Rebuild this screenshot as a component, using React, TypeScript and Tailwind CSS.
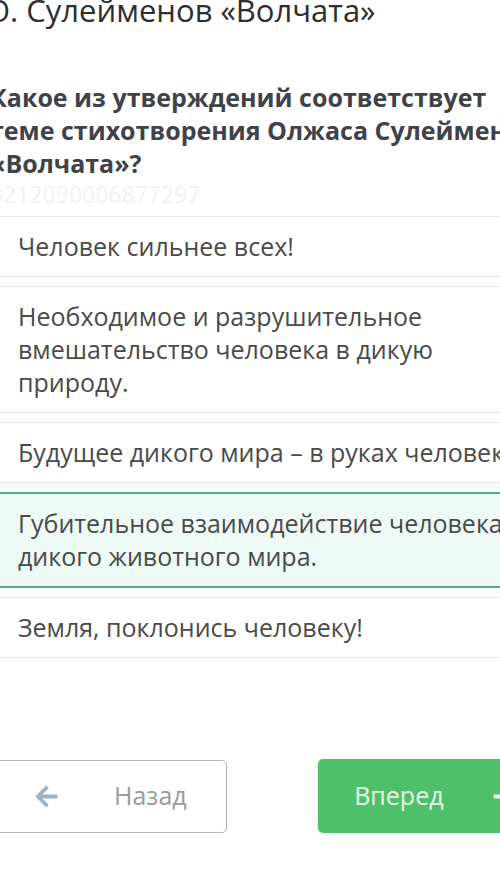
import { FaArrowLeft, FaArrowRight } from 'react-icons/fa';

const options = [
  { text: 'Человек сильнее всех!', selected: false },
  { text: 'Необходимое и разрушительное вмешательство человека в дикую природу.', selected: false },
  { text: 'Будущее дикого мира – в руках человека.', selected: false },
  { text: 'Губительное взаимодействие человека и дикого животного мира.', selected: true },
  { text: 'Земля, поклонись человеку!', selected: false },
];

export default function App() {
  return (
    <div className="w-[500px] h-[872px] overflow-hidden bg-white font-['Open_Sans',sans-serif]">
      <div className="-ml-[16px] w-[580px]">
        {/* Title */}
        <h1 className="mt-[-8px] pl-[2px] text-[31px] leading-[36px] text-[#2e2e2e] whitespace-nowrap">
          О. Сулейменов «Волчата»
        </h1>

        {/* Question */}
        <p className="mt-[53px] pl-[6px] text-[25px] leading-[33px] font-bold text-[#3f4349] whitespace-nowrap">
          Какое из утверждений соответствует
          <br />
          теме стихотворения Олжаса Сулейменова
          <br />
          «Волчата»?
        </p>
        <p className="mt-[2px] pl-[6px] text-[23px] leading-[24px] text-[#f1f1f1]">
          3212090006877297
        </p>

        {/* Options */}
        <div className="mt-[10px] flex flex-col gap-[9px]">
          {options.map(option => (
            <div
              key={option.text}
              className={
                option.selected
                  ? 'border-y-2 border-[#5aa99c] bg-[#eefaf5] pl-[34px] py-[13px]'
                  : 'border-y border-[#e6e6e6] bg-white pl-[34px] py-[13px]'
              }
            >
              <span className="block w-[520px] text-[25px] leading-[33px] text-[#4a4a4a]">
                {option.text}
              </span>
            </div>
          ))}
        </div>

        {/* Navigation */}
        <div className="mt-[101px] flex items-center gap-[91px]">
          <button className="flex items-center w-[247px] h-[73px] border-[1.5px] border-[#b4b4b4] rounded-[5px] bg-white pl-[49px]">
            <FaArrowLeft className="w-[25px] h-[25px] text-[#9fb3c8]" />
            <span className="ml-[55px] text-[25px] text-[#9b9b9b]">Назад</span>
          </button>
          <button className="flex items-center w-[250px] h-[74px] rounded-[5px] bg-[#4ec06a] pl-[36px]">
            <span className="text-[25px] text-[#eafbe9]">Вперед</span>
            <FaArrowRight className="ml-[48px] w-[25px] h-[25px] text-[#f2fbf2]" />
          </button>
        </div>
      </div>
    </div>
  );
}
